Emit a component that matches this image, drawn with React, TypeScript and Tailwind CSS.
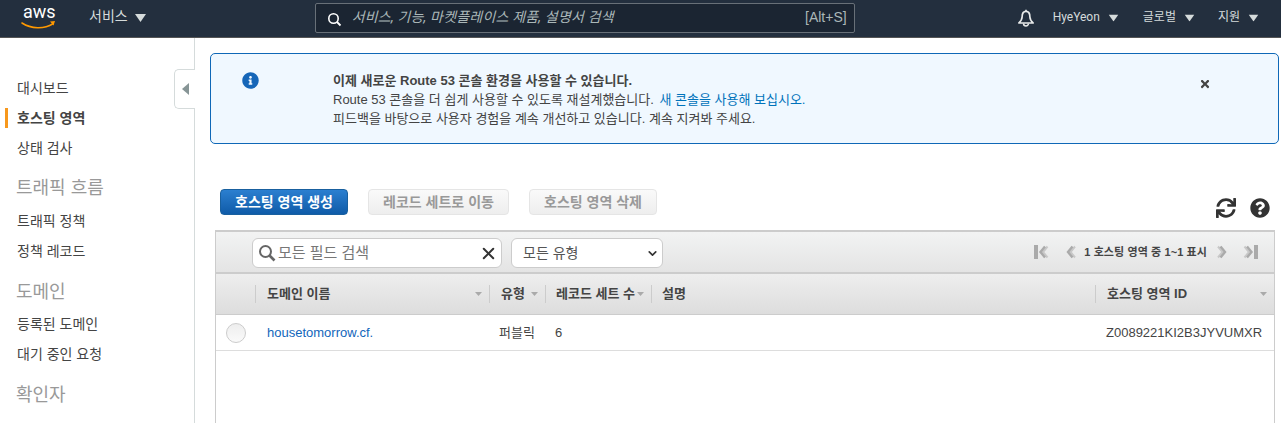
import React from 'react';
import { ChevronDown, X } from 'lucide-react';
import { FaQuestionCircle, FaSync, FaInfoCircle, FaTimes } from 'react-icons/fa';

const sans = 'font-["Liberation_Sans","Noto_Sans_CJK_KR",sans-serif]';
const top = 'font-["Roboto","Noto_Sans_CJK_KR",sans-serif]';

function Caret({ className }: { className?: string }) {
  return (
    <svg width="11" height="8" viewBox="0 0 11 8" className={className}>
      <path d="M0 0h11L5.500 8z" fill="currentColor" />
    </svg>
  );
}

function SortCaret() {
  return (
    <svg width="7" height="4" viewBox="0 0 7 4">
      <path d="M0 0h7L3.500 4z" fill="#aaa" />
    </svg>
  );
}

function NavItem({ label, active }: { label: string; active?: boolean }) {
  return (
    <div className="relative flex h-[30px] items-center pl-[17px]">
      {active && <div className="absolute left-[5px] top-[5px] h-5 w-[3px] bg-[#f7981d]" />}
      <span className={active ? 'text-[14px] font-bold text-[#444]' : 'text-[14px] text-[#444]'}>{label}</span>
    </div>
  );
}

function NavHeading({ label, className }: { label: string; className: string }) {
  return (
    <div className={`flex items-center pl-4 text-[18px] text-[#999] ${className}`}>{label}</div>
  );
}

function Pager({ flip, bar }: { flip?: boolean; bar?: boolean }) {
  return (
    <svg width="16" height="16" viewBox="0 0 16 16" className={flip ? 'scale-x-[-1]' : ''}>
      {bar && <rect x="0" y="1" width="4" height="14" fill="#aaa" />}
      <path d={bar ? 'M13.500 2.500L9 8l4.500 5.500' : 'M12 2.500L7.500 8l4.500 5.500'} fill="none" stroke="#c8c8c8" strokeWidth="2" />
      <path d={bar ? 'M11 2.500L6.500 8l4.500 5.500' : 'M9.500 2.500L5 8l4.500 5.500'} fill="none" stroke="#aaa" strokeWidth="2.400" />
    </svg>
  );
}

function HeaderCell({ label, className }: { label: string; className: string }) {
  return (
    <div className={`flex h-[18px] items-center border-l border-[#ccc] ${className}`}>
      <span className="flex-1 whitespace-nowrap text-[13px] font-bold text-[#444]">{label}</span>
      <SortCaret />
    </div>
  );
}

export default function App() {
  return (
    <div className={`flex h-[423px] w-[1281px] flex-col overflow-hidden bg-white ${sans}`}>
      {/* top bar */}
      <header className={`flex h-[38px] shrink-0 items-center border-b border-[#555] bg-[#232f3e] pb-[2px] text-[#d5dbdb] ${top}`}>
        <svg width="38" height="30" viewBox="0 0 38 30" className="ml-[20px] shrink-0 overflow-visible">
          <text x="3" y="15" fontSize="18" fill="#fff" fontFamily="Roboto, sans-serif">aws</text>
          <path d="M2 20c9 6 22 6.500 31 .8" fill="none" stroke="#f90" strokeWidth="1.600" strokeLinecap="round" />
          <path d="M30 18.500l5-.5-1.500 4.500z" fill="#f90" />
        </svg>
        <span className="ml-[31px] -translate-y-px text-[14px]">서비스</span>
        <Caret className="ml-[7px] text-[#d5dbdb]" />
        <div className="ml-[169px] flex h-[30px] w-[540px] items-center rounded-[2px] border border-[#687078] bg-[#1b2532] pl-[11px] pr-[7px]">
          <svg width="15" height="15" viewBox="0 0 15 15" className="mt-1">
            <circle cx="6.500" cy="6.500" r="4.700" fill="none" stroke="#fff" strokeWidth="1.600" />
            <path d="M10 10l3.500 3.500" stroke="#fff" strokeWidth="1.800" />
          </svg>
          <span className="ml-[10px] flex-1 text-[14px] italic tracking-[0.2px] text-[#aab7b8]">서비스, 기능, 마켓플레이스 제품, 설명서 검색</span>
          <span className={`text-[14px] text-[#aab7b8] ${sans}`}>[Alt+S]</span>
        </div>
        <svg width="20" height="20" viewBox="0 0 18 18" className="ml-[161px] shrink-0">
          <path d="M9 1.500v1.500M5.500 8c0-3 1.500-5 3.500-5s3.500 2 3.500 5c0 2.500 1 3.500 3 5.500h-13c2-2 3-3 3-5.500z" fill="none" stroke="#e8eaea" strokeWidth="1.500" strokeLinejoin="round" />
          <path d="M6.800 14a2.200 2.200 0 0 0 4.400 0" fill="none" stroke="#e8eaea" strokeWidth="1.400" />
        </svg>
        <span className="ml-[17px] -translate-y-px text-[12px]">HyeYeon</span>
        <Caret className="ml-[8px] scale-90" />
        <span className="ml-[24px] -translate-y-px text-[12px]">글로벌</span>
        <Caret className="ml-[8px] scale-90" />
        <span className="ml-[23px] -translate-y-px text-[12px]">지원</span>
        <Caret className="ml-[8px] scale-90" />
      </header>

      <div className="flex min-h-0 flex-1">
        {/* side nav */}
        <aside className="relative w-[195px] shrink-0 border-r border-[#d5dbdb] pt-[35px]">
          <NavItem label="대시보드" />
          <NavItem label="호스팅 영역" active />
          <NavItem label="상태 검사" />
          <NavHeading label="트래픽 흐름" className="mt-[7px] h-[36px]" />
          <NavItem label="트래픽 정책" />
          <NavItem label="정책 레코드" />
          <NavHeading label="도메인" className="mt-[9px] h-[34px]" />
          <NavItem label="등록된 도메인" />
          <NavItem label="대기 중인 요청" />
          <NavHeading label="확인자" className="mt-[8px] h-[36px]" />
          <NavItem label="VPC" />
          <div className="absolute left-[174px] top-[31px] flex h-10 w-[21px] items-center justify-center rounded-l-[5px] border border-r-0 border-[#d5dbdb] bg-white">
            <svg width="7" height="12" viewBox="0 0 7 12"><path d="M7 0v12L0 6z" fill="#879596" /></svg>
          </div>
        </aside>

        <main className="min-w-0 flex-1">
          {/* notice */}
          <div className="ml-[15px] mr-[2px] mt-[15px] flex h-[91px] rounded-[5px] border border-[#0f68b7] bg-[#f0f8ff] pt-[17px]">
            <FaInfoCircle className="ml-[31px] mt-[1px] shrink-0 text-[#1666b8]" size={17} />
            <div className="ml-[74px] w-[866px] text-[13px] leading-[19px] text-[#444]">
              <div className="font-bold">이제 새로운 Route 53 콘솔 환경을 사용할 수 있습니다.</div>
              <div>Route 53 콘솔을 더 쉽게 사용할 수 있도록 재설계했습니다. <a className="ml-[2px] text-[#0073bb]">새 콘솔을 사용해 보십시오.</a></div>
              <div>피드백을 바탕으로 사용자 경험을 계속 개선하고 있습니다. 계속 지켜봐 주세요.</div>
            </div>
            <FaTimes className="mt-[7px] shrink-0 text-[#444]" size={12} />
          </div>

          {/* actions */}
          <div className="mt-[45px] flex h-[26px] items-center pl-[25px] pr-[11px]">
            <button className="h-[26px] w-[128px] rounded-[4px] border border-[#19609f] bg-gradient-to-b from-[#2b7fd0] to-[#0f5ba8] text-[14px] font-bold text-white">호스팅 영역 생성</button>
            <button className="ml-[20px] h-[26px] w-[141px] rounded-[4px] border border-[#e5e5e5] bg-gradient-to-b from-[#fafafa] to-[#eee] text-[14px] font-bold text-[#999]">레코드 세트로 이동</button>
            <button className="ml-[20px] h-[26px] w-[128px] rounded-[4px] border border-[#e5e5e5] bg-gradient-to-b from-[#fafafa] to-[#eee] text-[14px] font-bold text-[#999]">호스팅 영역 삭제</button>
            <FaSync className="ml-auto mt-[12px] text-[#333]" size={20} />
            <FaQuestionCircle className="ml-[14px] mt-[12px] text-[#333]" size={20} />
          </div>

          {/* table */}
          <section className="ml-[20px] mr-[6px] mt-[15px] h-[200px] border-x border-t-2 border-x-[#ccc] border-t-[#ccc]">
            <div className="flex h-[42px] items-center border-b-2 border-[#ccc] bg-gradient-to-b from-[#f2f3f3] to-[#e4e4e4] pl-[36px] pr-[16px]">
              <div className="mt-[2px] flex h-[30px] w-[250px] items-center rounded-[6px] border border-[#ccc] bg-white pl-[5px] pr-[3px]">
                <svg width="18" height="18" viewBox="0 0 18 18">
                  <circle cx="7.500" cy="7.500" r="5.500" fill="none" stroke="#666" strokeWidth="2" />
                  <path d="M11.500 11.500l5 5" stroke="#666" strokeWidth="2.600" />
                </svg>
                <span className="ml-[2px] flex-1 text-[15px] text-[#777]">모든 필드 검색</span>
                <X size={19} strokeWidth={2.5} className="text-[#333]" />
              </div>
              <div className="ml-[9px] mt-[2px] flex h-[30px] w-[152px] items-center rounded-[6px] border border-[#ccc] bg-white pl-[11px] pr-[3px]">
                <span className="flex-1 text-[14px] text-[#555]">모든 유형</span>
                <ChevronDown size={13} strokeWidth={3} className="text-[#333]" />
              </div>
              <div className="ml-auto flex items-center">
                <Pager bar />
                <div className="ml-[13px]"><Pager /></div>
                <span className="ml-[5px] text-[11px] font-bold tracking-[0.1px] text-[#444]">1 호스팅 영역 중 1~1 표시</span>
                <div className="ml-[7px]"><Pager flip /></div>
                <div className="ml-[12px]"><Pager flip bar /></div>
              </div>
            </div>
            <div className="flex h-[41px] items-center border-b border-[#ccc] bg-gradient-to-b from-[#eee] to-[#ddd] pl-[39px]">
              <HeaderCell label="도메인 이름" className="w-[234px] pl-[11px] pr-[7px]" />
              <HeaderCell label="유형" className="w-[56px] pl-[11px] pr-[7px]" />
              <HeaderCell label="레코드 세트 수" className="w-[106px] pl-[10px] pr-[7px]" />
              <div className="flex h-[18px] w-[444px] items-center border-l border-[#ccc] pl-[10px] text-[13px] font-bold text-[#444]">설명</div>
              <HeaderCell label="호스팅 영역 ID" className="flex-1 pl-[11px] pr-[7px]" />
            </div>
            <div className="flex h-[36px] items-center border-b border-[#ddd] pl-[10px] text-[13px] text-[#444]">
              <span className="h-5 w-5 rounded-full border border-[#ccc] bg-gradient-to-b from-[#eee] to-[#fafafa]" />
              <a className="ml-[21px] w-[232px] text-[#1166bb]">housetomorrow.cf.</a>
              <span className="w-[56px]">퍼블릭</span>
              <span className="w-[551px]">6</span>
              <span>Z0089221KI2B3JYVUMXR</span>
            </div>
          </section>
        </main>
      </div>
    </div>
  );
}
